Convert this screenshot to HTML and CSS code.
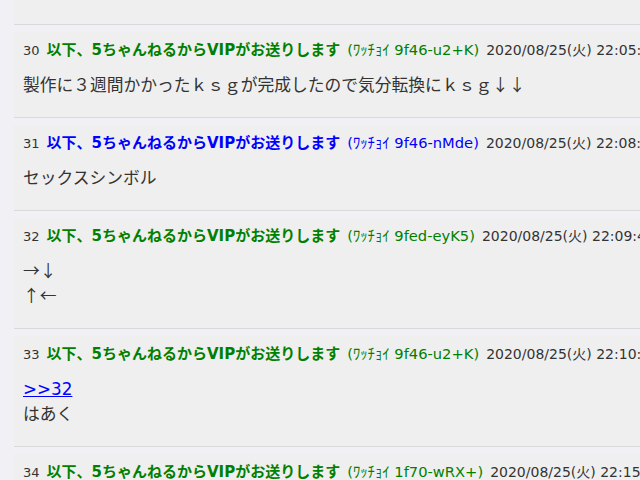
FILE: index.html
```html
<!DOCTYPE html>
<html lang="ja">
<head>
<meta charset="utf-8">
<title>thread</title>
<link rel="stylesheet" href="styles.css">
</head>
<body>
<div class="thread">
  <div class="post tail"></div>

  <div class="post">
    <div class="meta">
      <span class="number">30</span>
      <span class="name green">以下、5ちゃんねるからVIPがお送りします</span>
      <span class="uid green">(ﾜｯﾁｮｲ 9f46-u2+K)</span>
      <span class="date">2020/08/25(火) 22:05:31.45 ID:Qe4nK2pL0</span>
    </div>
    <div class="message">製作に３週間かかったｋｓｇが完成したので気分転換にｋｓｇ↓↓</div>
  </div>

  <div class="post">
    <div class="meta">
      <span class="number">31</span>
      <span class="name blue">以下、5ちゃんねるからVIPがお送りします</span>
      <span class="uid blue">(ﾜｯﾁｮｲ 9f46-nMde)</span>
      <span class="date">2020/08/25(火) 22:08:12.07 ID:hT8vWc3a0</span>
    </div>
    <div class="message">セックスシンボル</div>
  </div>

  <div class="post">
    <div class="meta">
      <span class="number">32</span>
      <span class="name green">以下、5ちゃんねるからVIPがお送りします</span>
      <span class="uid green">(ﾜｯﾁｮｲ 9fed-eyK5)</span>
      <span class="date">2020/08/25(火) 22:09:48.91 ID:mZ2rYb7s0</span>
    </div>
    <div class="message">→↓<br>↑←</div>
  </div>

  <div class="post">
    <div class="meta">
      <span class="number">33</span>
      <span class="name green">以下、5ちゃんねるからVIPがお送りします</span>
      <span class="uid green">(ﾜｯﾁｮｲ 9f46-u2+K)</span>
      <span class="date">2020/08/25(火) 22:10:05.33 ID:Qe4nK2pL0</span>
    </div>
    <div class="message"><a class="reply" href="#">&gt;&gt;32</a><br>はあく</div>
  </div>

  <div class="post">
    <div class="meta">
      <span class="number">34</span>
      <span class="name green">以下、5ちゃんねるからVIPがお送りします</span>
      <span class="uid green">(ﾜｯﾁｮｲ 1f70-wRX+)</span>
      <span class="date">2020/08/25(火) 22:15:27.60 ID:pL9xGd1k0</span>
    </div>
    <div class="message">ｋｓｇってなんだよ</div>
  </div>
</div>
</body>
</html>
```

FILE: styles.css
```css
html, body {
  margin: 0;
  padding: 0;
}

body {
  background: #f0f0f5;
  color: #333333;
  font-family: "DejaVu Sans", "Noto Sans CJK JP", sans-serif;
  overflow: hidden;
  height: 480px;
}

.thread {
  padding-left: 14px;
  width: 900px;
}

.post {
  background: #efefef;
  border-bottom: 1px solid #dadada;
  margin-bottom: 7px;
  padding: 8px 0 20px 9px;
}

.post.tail {
  height: 25px;
  padding: 0;
  box-sizing: border-box;
}

.meta {
  display: flex;
  align-items: baseline;
  gap: 7px;
  height: 20px;
  white-space: nowrap;
  font-size: 14px;
  line-height: 20px;
}

.number {
  color: #333333;
  font-size: 13px;
}

.name {
  font-size: 15px;
  font-weight: bold;
}

.uid {
  font-size: 14.7px;
}

.green {
  color: #008000;
}

.blue {
  color: #0000ff;
}

.date {
  color: #333333;
}

.message {
  margin-top: 12px;
  font-family: "Noto Sans CJK JP", sans-serif;
  font-size: 16.75px;
  line-height: 25px;
  color: #333333;
}

.reply {
  font-family: "DejaVu Sans", "Noto Sans CJK JP", sans-serif;
  line-height: 1;
  color: #0000ff;
  text-decoration: underline;
}
```
